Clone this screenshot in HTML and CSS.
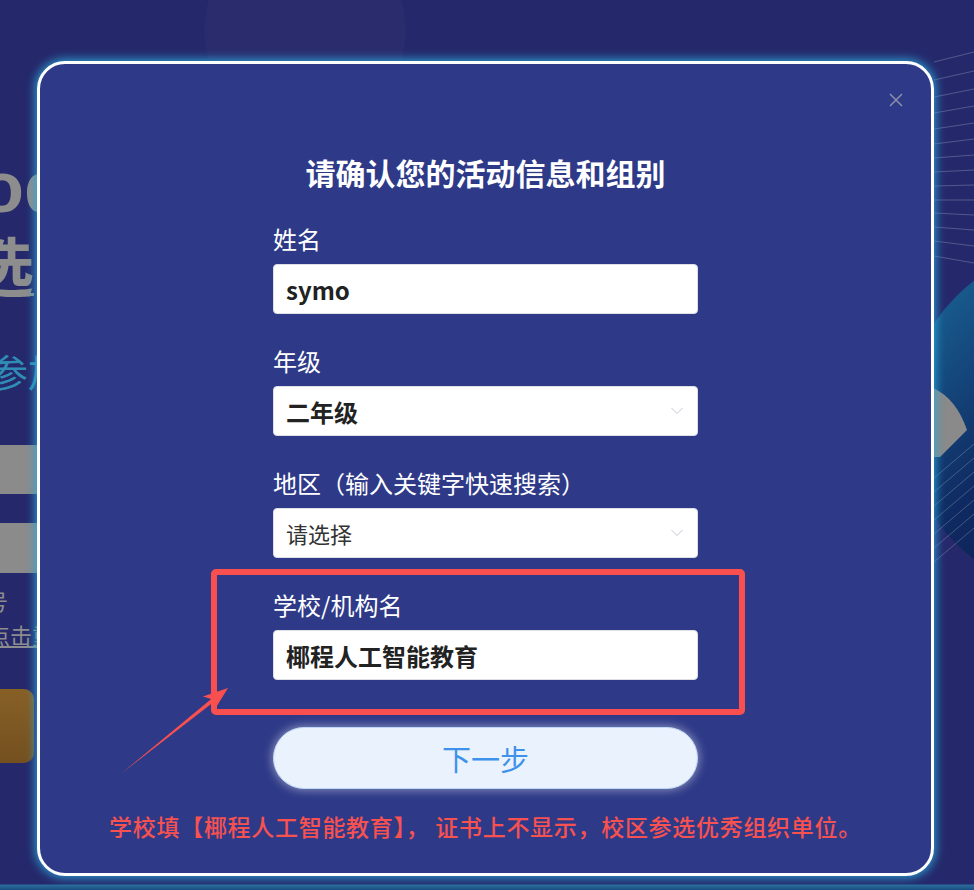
FILE: index.html
```html
<!DOCTYPE html>
<html lang="zh-CN">
<head>
  <meta charset="UTF-8">
  <meta name="viewport" content="width=device-width, initial-scale=1.0">
  <title>确认活动信息</title>
  <link rel="stylesheet" href="styles.css">
</head>
<body>
  <!-- page behind the dialog (dimmed) -->
  <div class="page">
    <div class="bg-left">
      <div class="bg-title">od</div>
      <div class="bg-sub">选</div>
      <div class="bg-join">参加</div>
      <div class="bg-field"></div>
      <div class="bg-field second"></div>
      <div class="bg-note">号</div>
      <div class="bg-link">点击重</div>
      <div class="bg-btn"></div>
    </div>
    <svg class="bg-right" width="40" height="890" viewBox="0 0 40 890">
      <defs>
        <linearGradient id="ball" x1="0" y1="0" x2="1" y2="1">
          <stop offset="0" stop-color="#1c6f9f"/>
          <stop offset="0.45" stop-color="#0f2a62"/>
          <stop offset="1" stop-color="#0a1240"/>
        </linearGradient>
      </defs>
      <g stroke="rgba(255,255,255,0.22)" stroke-width="1" fill="none">
        <path d="M0 62 L40 52"/>
        <path d="M0 80 L40 71"/>
        <path d="M0 97 L40 89"/>
        <path d="M0 113 L40 106"/>
        <path d="M0 129 L40 123"/>
        <path d="M0 144 L40 139"/>
        <path d="M0 158 L40 155"/>
        <path d="M0 172 L40 170"/>
        <path d="M0 186 L40 185"/>
        <path d="M0 200 L40 200"/>
        <path d="M0 213 L40 215"/>
        <path d="M0 227 L40 230"/>
        <path d="M0 241 L40 246"/>
        <path d="M0 256 L40 263"/>
      </g>
      <circle cx="146" cy="420" r="175" fill="url(#ball)"/>
      <path d="M-1 388 Q22 398 33 430 L6 457 L-1 457 Z" fill="#8a8a8a"/>
      <g stroke="rgba(255,255,255,0.22)" stroke-width="1" fill="none">
        <path d="M0 478 L40 444"/>
        <path d="M0 492 L40 458"/>
        <path d="M0 506 L40 472"/>
        <path d="M0 520 L40 486"/>
        <path d="M0 534 L40 500"/>
        <path d="M0 548 L40 514"/>
        <path d="M0 562 L40 528"/>
      </g>
    </svg>
  </div>

  <div class="modal">
    <span class="close">
      <svg width="14" height="14" viewBox="0 0 14 14">
        <path d="M1 1 L13 13 M13 1 L1 13" stroke="#8c90aa" stroke-width="1.5" fill="none"/>
      </svg>
    </span>
    <h2 class="modal-title">请确认您的活动信息和组别</h2>

    <form class="form">
      <div class="field">
        <label for="name">姓名</label>
        <input id="name" class="input" type="text" value="symo">
      </div>
      <div class="field">
        <label>年级</label>
        <div class="select">
          <span class="select-value">二年级</span>
          <svg class="chevron" width="12" height="8" viewBox="0 0 12 8"><path d="M0.5 1 L6 6.5 L11.5 1" stroke="#c4c7d0" stroke-width="1" fill="none"/></svg>
        </div>
      </div>
      <div class="field">
        <label>地区（输入关键字快速搜索）</label>
        <div class="select">
          <span class="select-placeholder">请选择</span>
          <svg class="chevron" width="12" height="8" viewBox="0 0 12 8"><path d="M0.5 1 L6 6.5 L11.5 1" stroke="#c4c7d0" stroke-width="1" fill="none"/></svg>
        </div>
      </div>
      <div class="field">
        <label for="school">学校/机构名</label>
        <input id="school" class="input" type="text" value="椰程人工智能教育">
      </div>
      <button type="button" class="next">下一步</button>
    </form>

    <p class="tip">学校填【椰程人工智能教育】， 证书上不显示，校区参选优秀组织单位。</p>
  </div>

  <!-- red annotation drawn over the screenshot -->
  <svg class="annot" width="974" height="890" viewBox="0 0 974 890">
    <rect x="214" y="572" width="528" height="140" rx="2" fill="none" stroke="#f9504f" stroke-width="6"/>
    <polygon points="122,773 211.2,698.9 202.9,696.6 228,688 214.1,710.6 213.7,702.1" fill="#f9504f"/>
  </svg>
</body>
</html>
```

FILE: styles.css
```css
body {
  margin: 0;
  padding: 0;
  overflow: hidden;
  font-family: "Noto Sans CJK SC", "Noto Sans", sans-serif;
}

.page {
  display: flex;
  justify-content: space-between;
  height: 890px;
  overflow: hidden;
  background:
    radial-gradient(circle at 305px 30px, #2b2c6d 0 100px, transparent 101px),
    linear-gradient(to bottom, #25296b 0 884px, #2c6c9c 885px, #174e80 890px);
}

.bg-left {
  width: 40px;
  color: #8d8d8d;
  white-space: nowrap;
}

.bg-title {
  margin: 151px 0 0 -20px;
  height: 72px;
  font-family: "Liberation Sans", sans-serif;
  font-weight: bold;
  font-size: 72px;
  line-height: 72px;
}

.bg-sub {
  margin: 6px 0 0 -30px;
  height: 68px;
  font-size: 64px;
  line-height: 68px;
  font-weight: bold;
  text-decoration: underline;
  text-decoration-thickness: 3px;
}

.bg-join {
  margin: 54px 0 0 -10px;
  height: 40px;
  font-size: 38px;
  line-height: 40px;
  color: #2f8db5;
}

.bg-field {
  margin: 54px 0 0 -10px;
  width: 60px;
  height: 49px;
  background-color: #8b8b8b;
}

.bg-field.second {
  margin-top: 29px;
  height: 50px;
}

.bg-note {
  margin: 16px 0 0 -14px;
  height: 22px;
  font-size: 22px;
  line-height: 22px;
}

.bg-link {
  margin: 11px 0 0 -12px;
  height: 24px;
  font-size: 22px;
  line-height: 24px;
  text-decoration: underline;
}

.bg-btn {
  margin: 43px 0 0 -20px;
  width: 54px;
  height: 74px;
  border-radius: 10px;
  background: linear-gradient(#876026, #745020);
}

.bg-right {
  display: block;
}

.modal {
  position: absolute;
  left: 37px;
  top: 61px;
  width: 897px;
  height: 815px;
  box-sizing: border-box;
  padding-top: 88px;
  border: 3px solid #fff;
  border-radius: 28px;
  background-color: #2e3a88;
  box-shadow: 0 0 10px 2px rgba(45, 170, 220, 0.85);
}

.close {
  position: absolute;
  top: 29px;
  right: 28px;
  width: 14px;
  height: 14px;
}

.close svg {
  display: block;
}

.modal-title {
  margin: 0;
  font-size: 30px;
  line-height: 40px;
  font-weight: bold;
  text-align: center;
  color: #fff;
}

.form {
  width: 425px;
  margin: 30px auto 0;
}

.field {
  margin-bottom: 30px;
}

.field label {
  display: block;
  margin-bottom: 8px;
  font-size: 24px;
  line-height: 34px;
  color: #fff;
}

.input,
.select {
  display: flex;
  align-items: center;
  width: 100%;
  height: 50px;
  box-sizing: border-box;
  margin: 0;
  padding: 0 12px;
  border: 1px solid #dcdfe6;
  border-radius: 4px;
  background-color: #fff;
  font-family: "Noto Sans CJK SC", "Noto Sans", sans-serif;
  font-size: 24px;
  font-weight: bold;
  color: #222;
  outline: none;
}

.select {
  justify-content: space-between;
  padding-right: 14px;
}

.select-placeholder {
  font-size: 22px;
  font-weight: normal;
  color: #333;
}

.chevron {
  display: block;
}

.next {
  display: block;
  width: 100%;
  height: 62px;
  margin-top: 47px;
  border: 1px solid #bcd6f5;
  border-radius: 31px;
  background-color: #eaf2fd;
  box-shadow: 0 0 10px 1px rgba(255, 255, 255, 0.45);
  font-family: "Noto Sans CJK SC", "Noto Sans", sans-serif;
  font-size: 29px;
  color: #3f92ea;
  cursor: pointer;
}

.tip {
  margin: 21px 0 0;
  font-size: 23px;
  line-height: 32px;
  letter-spacing: 0.7px;
  font-weight: 500;
  text-align: center;
  color: #f75150;
}

.annot {
  position: absolute;
  left: 0;
  top: 0;
  pointer-events: none;
}
```
